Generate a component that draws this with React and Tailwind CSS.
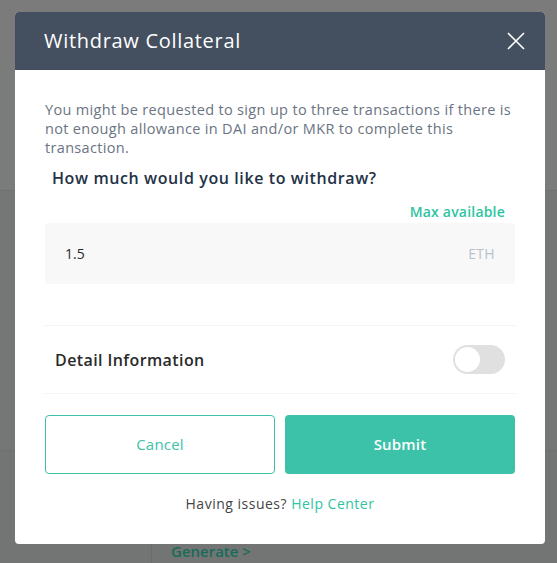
import React, { useState } from "react";

const font = { fontFamily: '"Open Sans", "Noto Sans", sans-serif' };

const Backdrop = () => (
    <div className="absolute inset-0 bg-[#767878]">
        <div className="h-[60px] bg-[#7b7b7b]" />
        <div className="h-[130px] bg-[#7a7b7b]" />
        <div className="h-[260px] border-t border-[#707272] bg-[#757777]" />
        <div className="flex h-[113px] border-t border-[#6f7171] bg-[#737575]">
            <div className="w-[152px] border-r border-[#6a6c6c]" />
            <div className="flex flex-col justify-end pb-[1px] pl-[19px] text-[15px] font-semibold text-[#1a6b57]">
                Generate &gt;
            </div>
        </div>
    </div>
);

const Toggle = () => {
    const [on, setOn] = useState(false);
    return (
        <button
            onClick={() => setOn(!on)}
            className={`flex h-[29px] w-[52px] items-center rounded-full px-[2px] ${on ? "bg-[#3cc2a8] justify-end" : "bg-[#e0e0e0] justify-start"}`}
        >
            <span className="block h-[25px] w-[25px] rounded-full bg-white" />
        </button>
    );
};

export default function App() {
    return (
        <div className="relative h-[563px] w-[557px] overflow-hidden" style={font}>
            <Backdrop />

            {/* Modal */}
            <div className="absolute left-[15px] top-[12px] w-[530px] overflow-hidden rounded-[4px] bg-white">
                <div className="flex h-[58px] items-center justify-between bg-[#444f60] pl-[29px] pr-[20px]">
                    <h2 className="text-[20px] font-normal tracking-[0.7px] text-white">Withdraw Collateral</h2>
                    <svg width="18" height="18" viewBox="0 0 18 18" fill="none" stroke="white" strokeWidth="1.6">
                        <path d="M1 1L17 17M17 1L1 17" />
                    </svg>
                </div>

                <div className="px-[30px] pt-[30px]">
                    <p className="text-[14.5px] leading-[19px] tracking-[0.33px] text-[#6b7482]">
                        You might be requested to sign up to three transactions if there is not enough allowance in DAI and/or MKR to complete this transaction.
                    </p>
                    <div className="mt-[10px] pl-[7px] text-[16px] font-semibold leading-[22px] tracking-[0.6px] text-[#233246]">
                        How much would you like to withdraw?
                    </div>
                    <div className="mt-[13px] flex justify-end pr-[10px] text-[14px] font-semibold leading-[20px] tracking-[0.2px] text-[#2ec4a2]">
                        Max available
                    </div>
                    <div className="mt-[1px] flex h-[61px] items-center justify-between rounded-[4px] bg-[#f8f8f8] px-[20px]">
                        <span className="text-[14px] text-[#2a2a2a]">1.5</span>
                        <span className="text-[14px] tracking-[0.3px] text-[#b8c2cc]">ETH</span>
                    </div>

                    <div className="mt-[41px] border-t border-[#f3f3f3]" />
                    <div className="flex h-[67px] items-center justify-between pl-[10px] pr-[10px]">
                        <span className="text-[16px] font-semibold tracking-[0.4px] text-[#2a2a2a]">Detail Information</span>
                        <Toggle />
                    </div>
                    <div className="border-t border-[#f3f3f3]" />

                    <div className="mt-[21px] grid grid-cols-2 gap-[10px]">
                        <button className="h-[59px] rounded-[4px] border border-[#3cc2a8] text-[15px] font-medium tracking-[0.2px] text-[#3cc2a8]">
                            Cancel
                        </button>
                        <button className="h-[59px] rounded-[4px] bg-[#3cc2a8] text-[15px] font-semibold tracking-[0.2px] text-white">
                            Submit
                        </button>
                    </div>

                    <div className="pb-[30px] pt-[20px] text-center text-[14px] leading-[20px] tracking-[0.5px] text-[#444]">
                        Having issues? <span className="text-[#2ec4a2]">Help Center</span>
                    </div>
                </div>
            </div>
        </div>
    );
}
